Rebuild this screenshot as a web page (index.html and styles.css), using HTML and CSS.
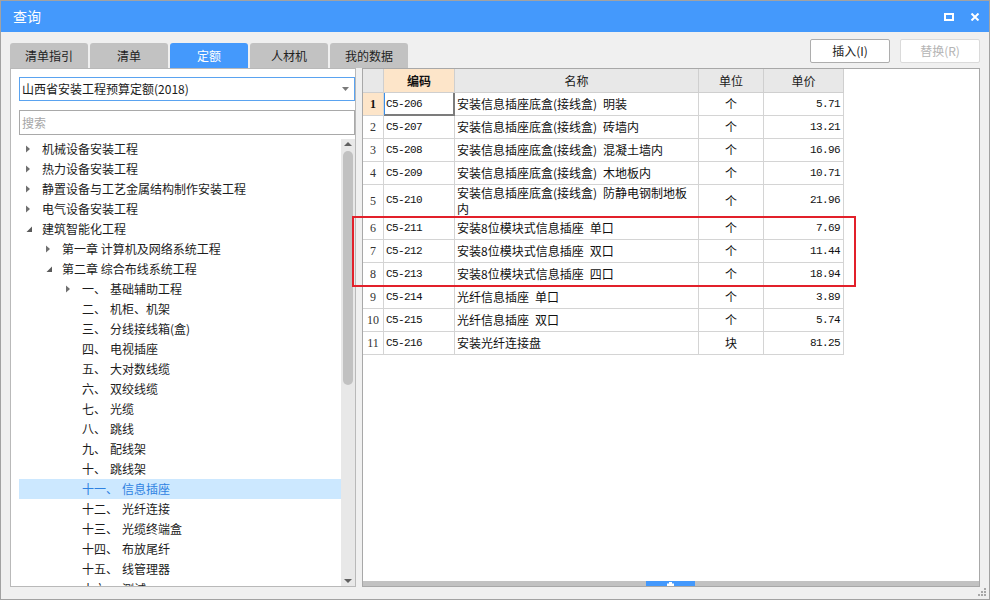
FILE: index.html
```html
<!DOCTYPE html>
<html lang="zh-CN">
<head>
<meta charset="utf-8">
<title>查询</title>
<link rel="stylesheet" href="styles.css">
</head>
<body>
<div class="window">
  <div class="titlebar">
    <span class="title">查询</span>
    <div class="winctl">
      <svg width="10" height="8" viewBox="0 0 10 8"><rect x="1" y="1" width="8" height="6" fill="none" stroke="#fff" stroke-width="2"/></svg>
      <svg width="10" height="8" viewBox="0 0 10 8"><path d="M1.5 0.5 L8.5 7.5 M8.5 0.5 L1.5 7.5" stroke="#fff" stroke-width="2"/></svg>
    </div>
  </div>
  <div class="toolbar">
    <div class="tabs">
      <div class="tab">清单指引</div>
      <div class="tab">清单</div>
      <div class="tab active">定额</div>
      <div class="tab">人材机</div>
      <div class="tab">我的数据</div>
    </div>
    <div class="actions">
      <button class="btn">插入(I)</button>
      <button class="btn disabled">替换(R)</button>
    </div>
  </div>
  <div class="main">
    <div class="left">
      <div class="select">
        <span class="select-text">山西省安装工程预算定额(2018)</span>
        <svg width="7" height="4" viewBox="0 0 7 4"><path d="M0 0 H7 L3.5 4 Z" fill="#7a7a7a"/></svg>
      </div>
      <div class="search">搜索</div>
      <div class="treewrap">
        <div class="tree">
          <div class="row l0"><svg class="arrow" viewBox="0 0 19 20"><path d="M3 6.5 L7 10 L3 13.5 Z" fill="#707070"/></svg><span>机械设备安装工程</span></div>
          <div class="row l0"><svg class="arrow" viewBox="0 0 19 20"><path d="M3 6.5 L7 10 L3 13.5 Z" fill="#707070"/></svg><span>热力设备安装工程</span></div>
          <div class="row l0"><svg class="arrow" viewBox="0 0 19 20"><path d="M3 6.5 L7 10 L3 13.5 Z" fill="#707070"/></svg><span>静置设备与工艺金属结构制作安装工程</span></div>
          <div class="row l0"><svg class="arrow" viewBox="0 0 19 20"><path d="M3 6.5 L7 10 L3 13.5 Z" fill="#707070"/></svg><span>电气设备安装工程</span></div>
          <div class="row l0"><svg class="arrow" viewBox="0 0 19 20"><path d="M9 7.5 L9 13 L3.5 13 Z" fill="#5a5a5a"/></svg><span>建筑智能化工程</span></div>
          <div class="row l1"><svg class="arrow" viewBox="0 0 19 20"><path d="M3 6.5 L7 10 L3 13.5 Z" fill="#707070"/></svg><span>第一章 计算机及网络系统工程</span></div>
          <div class="row l1"><svg class="arrow" viewBox="0 0 19 20"><path d="M9 7.5 L9 13 L3.5 13 Z" fill="#5a5a5a"/></svg><span>第二章 综合布线系统工程</span></div>
          <div class="row l2"><svg class="arrow" viewBox="0 0 19 20"><path d="M3 6.5 L7 10 L3 13.5 Z" fill="#707070"/></svg><span class="num">一、</span><span class="name">基础辅助工程</span></div>
          <div class="row l2"><span class="arrow"></span><span class="num">二、</span><span class="name">机柜、机架</span></div>
          <div class="row l2"><span class="arrow"></span><span class="num">三、</span><span class="name">分线接线箱(盒)</span></div>
          <div class="row l2"><span class="arrow"></span><span class="num">四、</span><span class="name">电视插座</span></div>
          <div class="row l2"><span class="arrow"></span><span class="num">五、</span><span class="name">大对数线缆</span></div>
          <div class="row l2"><span class="arrow"></span><span class="num">六、</span><span class="name">双绞线缆</span></div>
          <div class="row l2"><span class="arrow"></span><span class="num">七、</span><span class="name">光缆</span></div>
          <div class="row l2"><span class="arrow"></span><span class="num">八、</span><span class="name">跳线</span></div>
          <div class="row l2"><span class="arrow"></span><span class="num">九、</span><span class="name">配线架</span></div>
          <div class="row l2"><span class="arrow"></span><span class="num">十、</span><span class="name">跳线架</span></div>
          <div class="row l2 sel"><span class="arrow"></span><span class="num">十一、</span><span class="name">信息插座</span></div>
          <div class="row l2"><span class="arrow"></span><span class="num">十二、</span><span class="name">光纤连接</span></div>
          <div class="row l2"><span class="arrow"></span><span class="num">十三、</span><span class="name">光缆终端盒</span></div>
          <div class="row l2"><span class="arrow"></span><span class="num">十四、</span><span class="name">布放尾纤</span></div>
          <div class="row l2"><span class="arrow"></span><span class="num">十五、</span><span class="name">线管理器</span></div>
          <div class="row l2"><span class="arrow"></span><span class="num">十六、</span><span class="name">测试</span></div>
        </div>
        <div class="vscroll">
          <svg class="sb-arrow" width="14" height="12" viewBox="0 0 14 12"><path d="M3 7 L7 3 L11 7 Z" fill="#606060"/></svg>
          <div class="thumb"></div>
          <div class="sb-space"></div>
          <svg class="sb-arrow" width="14" height="12" viewBox="0 0 14 12"><path d="M3 5 L11 5 L7 9 Z" fill="#606060"/></svg>
        </div>
      </div>
    </div>
    <div class="right">
      <div class="grid">
        <div class="gr hdr">
          <div class="c"></div>
          <div class="c code-h">编码</div>
          <div class="c">名称</div>
          <div class="c">单位</div>
          <div class="c">单价</div>
        </div>
        <div class="gr">
          <div class="c rn cur">1</div>
          <div class="c code focus">C5-206</div>
          <div class="c nm">安装信息插座底盒(接线盒)&ensp;明装</div>
          <div class="c un">个</div>
          <div class="c pr">5.71</div>
        </div>
        <div class="gr">
          <div class="c rn">2</div>
          <div class="c code">C5-207</div>
          <div class="c nm">安装信息插座底盒(接线盒)&ensp;砖墙内</div>
          <div class="c un">个</div>
          <div class="c pr">13.21</div>
        </div>
        <div class="gr">
          <div class="c rn">3</div>
          <div class="c code">C5-208</div>
          <div class="c nm">安装信息插座底盒(接线盒)&ensp;混凝土墙内</div>
          <div class="c un">个</div>
          <div class="c pr">16.96</div>
        </div>
        <div class="gr">
          <div class="c rn">4</div>
          <div class="c code">C5-209</div>
          <div class="c nm">安装信息插座底盒(接线盒)&ensp;木地板内</div>
          <div class="c un">个</div>
          <div class="c pr">10.71</div>
        </div>
        <div class="gr tall">
          <div class="c rn">5</div>
          <div class="c code">C5-210</div>
          <div class="c nm">安装信息插座底盒(接线盒)&ensp;防静电钢制地板<br>内</div>
          <div class="c un">个</div>
          <div class="c pr">21.96</div>
        </div>
        <div class="gr">
          <div class="c rn">6</div>
          <div class="c code">C5-211</div>
          <div class="c nm">安装8位模块式信息插座&ensp;单口</div>
          <div class="c un">个</div>
          <div class="c pr">7.69</div>
        </div>
        <div class="gr">
          <div class="c rn">7</div>
          <div class="c code">C5-212</div>
          <div class="c nm">安装8位模块式信息插座&ensp;双口</div>
          <div class="c un">个</div>
          <div class="c pr">11.44</div>
        </div>
        <div class="gr">
          <div class="c rn">8</div>
          <div class="c code">C5-213</div>
          <div class="c nm">安装8位模块式信息插座&ensp;四口</div>
          <div class="c un">个</div>
          <div class="c pr">18.94</div>
        </div>
        <div class="gr">
          <div class="c rn">9</div>
          <div class="c code">C5-214</div>
          <div class="c nm">光纤信息插座&ensp;单口</div>
          <div class="c un">个</div>
          <div class="c pr">3.89</div>
        </div>
        <div class="gr">
          <div class="c rn">10</div>
          <div class="c code">C5-215</div>
          <div class="c nm">光纤信息插座&ensp;双口</div>
          <div class="c un">个</div>
          <div class="c pr">5.74</div>
        </div>
        <div class="gr">
          <div class="c rn">11</div>
          <div class="c code">C5-216</div>
          <div class="c nm">安装光纤连接盘</div>
          <div class="c un">块</div>
          <div class="c pr">81.25</div>
        </div>
      </div>
      <div class="hbar">
        <div class="handle"><svg width="7" height="4" viewBox="0 0 7 4"><path d="M2 0 H5 V1.5 H7 V4 H0 V1.5 H2 Z" fill="#fff"/></svg></div>
      </div>
    </div>
  </div>
  <div class="bottom"></div>
  <div class="redbox"></div>
  <svg class="grip" width="8" height="8" viewBox="0 0 8 8">
    <rect x="6" y="0" width="2" height="2" fill="#a8a8a8"/>
    <rect x="3" y="3" width="2" height="2" fill="#a8a8a8"/>
    <rect x="6" y="3" width="2" height="2" fill="#a8a8a8"/>
    <rect x="0" y="6" width="2" height="2" fill="#a8a8a8"/>
    <rect x="3" y="6" width="2" height="2" fill="#a8a8a8"/>
    <rect x="6" y="6" width="2" height="2" fill="#a8a8a8"/>
  </svg>
</div>
</body>
</html>
```

FILE: styles.css
```css
html, body {
  margin: 0;
  padding: 0;
}
body {
  width: 990px;
  height: 600px;
  overflow: hidden;
  font-family: "Noto Sans CJK SC", "Noto Sans", sans-serif;
  font-size: 12px;
  color: #1e1e1e;
}
.window {
  position: relative;
  box-sizing: border-box;
  width: 990px;
  height: 600px;
  border: 1px solid #a2a2a2;
  background: #f0f0f0;
  display: flex;
  flex-direction: column;
}
.titlebar {
  height: 31px;
  flex: none;
  background: #4499fc;
  display: flex;
  align-items: center;
  padding: 0 9px 0 12px;
  color: #fff;
}
.title {
  font-size: 14px;
  line-height: 31px;
}
.winctl {
  margin-left: auto;
  display: flex;
  gap: 16px;
  align-items: center;
}
.winctl svg { display: block; }

.toolbar {
  height: 36px;
  flex: none;
  display: flex;
  padding: 0 9px;
}
.tabs {
  display: flex;
  gap: 2px;
  align-self: flex-end;
}
.tab {
  width: 78px;
  height: 25px;
  background: #c2c2c2;
  border-radius: 3px 3px 0 0;
  display: flex;
  align-items: center;
  justify-content: center;
  color: #222;
  line-height: 1;
}
.tab.active {
  background: #4499fc;
  color: #fff;
}
.actions {
  margin-left: auto;
  display: flex;
  gap: 10px;
  padding-top: 7px;
  align-self: flex-start;
}
.btn {
  width: 80px;
  height: 24px;
  box-sizing: border-box;
  border: 1px solid #adadad;
  background: #fff;
  border-radius: 2px;
  font-family: "Noto Sans CJK SC", "Noto Sans", sans-serif;
  font-size: 12px;
  color: #222;
  padding: 0;
  line-height: 1;
}
.btn.disabled {
  border-color: #dadada;
  color: #b4b4b4;
}

.main {
  height: 519px;
  flex: none;
  display: flex;
  gap: 6px;
  padding: 0 9px;
}
.left {
  width: 346px;
  flex: none;
  box-sizing: border-box;
  border: 1px solid #b9b9b9;
  background: #fff;
  display: flex;
  flex-direction: column;
  padding: 8px 0 0 8px;
}
.select {
  height: 24px;
  flex: none;
  box-sizing: border-box;
  border: 1px solid #5aa3f0;
  display: flex;
  align-items: center;
  padding: 0 5px 0 2px;
  color: #1a1a1a;
}
.select-text { flex: 1; line-height: 1; }
.select svg { display: block; }
.search {
  margin-top: 9px;
  height: 25px;
  flex: none;
  box-sizing: border-box;
  border: 1px solid #a9a9a9;
  color: #a6a6a6;
  padding-left: 2px;
  display: flex;
  align-items: center;
  line-height: 1;
}
.treewrap {
  margin-top: 4px;
  margin-left: -8px;
  flex: 1;
  min-height: 0;
  display: flex;
}
.tree {
  flex: 1;
  padding-left: 8px;
  overflow: hidden;
}
.row {
  height: 20px;
  display: flex;
  align-items: center;
  white-space: nowrap;
  line-height: 1;
  color: #1c1c1c;
}
.row.l0 { padding-left: 4px; }
.row.l1 { padding-left: 24px; }
.row.l2 { padding-left: 44px; }
.arrow {
  width: 19px;
  height: 20px;
  flex: none;
  display: block;
}
.name { margin-left: 4px; }
.row.sel {
  background: #cce8ff;
  color: #2f82e2;
}
.vscroll {
  width: 14px;
  flex: none;
  background: #e8e8e8;
  display: flex;
  flex-direction: column;
  align-items: center;
}
.sb-arrow { display: block; flex: none; }
.thumb {
  width: 10px;
  height: 234px;
  flex: none;
  border-radius: 5px;
  background: #c1c1c1;
}
.sb-space { flex: 1; }

.right {
  flex: 1;
  box-sizing: border-box;
  border: 1px solid #a8a8a8;
  background: #fff;
  display: flex;
  flex-direction: column;
}
.grid { flex: none; }
.gr {
  display: grid;
  grid-template-columns: 21px 71px 244px 65px 80px;
  height: 23px;
}
.gr.tall { height: 32px; }
.gr.hdr { height: 24px; }
.c {
  box-sizing: border-box;
  border-right: 1px solid #d4d4d4;
  border-bottom: 1px solid #d4d4d4;
  display: flex;
  align-items: center;
  overflow: hidden;
  white-space: nowrap;
  color: #111;
  line-height: 1;
}
.hdr .c {
  background: #e8e8e8;
  justify-content: center;
  color: #1a1a1a;
  border-color: #cfcfcf;
}
.hdr .c.code-h {
  background: #fde5c9;
  font-weight: bold;
  color: #111;
}
.rn {
  justify-content: center;
  font-family: "Liberation Serif", serif;
  font-size: 12px;
  color: #333;
}
.rn.cur {
  background: #fde5c9;
  font-weight: bold;
  color: #111;
}
.code {
  padding-left: 2px;
  font-family: "Liberation Mono", monospace;
  font-size: 11px;
  letter-spacing: -0.6px;
}
.code.focus {
  box-shadow: inset 1px 0 0 #3b8fe8, inset -1px -1px 0 #7c7c7c;
  border-right-color: #7c7c7c;
  border-bottom-color: #7c7c7c;
}
.nm {
  padding-left: 2px;
  line-height: 16px;
}
.un { justify-content: center; }
.pr {
  justify-content: flex-end;
  padding-right: 3px;
  font-family: "Liberation Mono", monospace;
  font-size: 11px;
  letter-spacing: -0.6px;
}
.hbar {
  margin-top: auto;
  height: 5px;
  flex: none;
  background: #c2c2c2;
  display: flex;
}
.handle {
  margin-left: 283px;
  width: 49px;
  height: 5px;
  background: #4499fc;
  display: flex;
  align-items: flex-end;
  justify-content: center;
}
.handle svg { display: block; }
.bottom {
  height: 12px;
  flex: none;
}
.redbox {
  position: absolute;
  left: 351px;
  top: 215px;
  width: 504px;
  height: 71px;
  box-sizing: border-box;
  border: 2px solid #e2202a;
  pointer-events: none;
}
.grip {
  position: absolute;
  right: 3px;
  bottom: 3px;
  display: block;
}
```
